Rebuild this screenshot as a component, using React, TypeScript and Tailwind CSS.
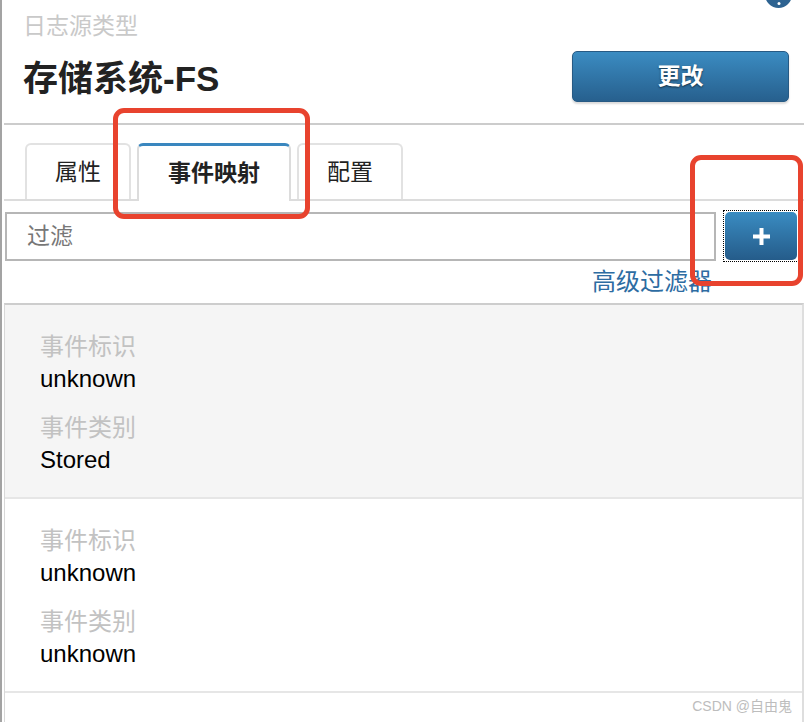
import React from "react";

interface MappingItem {
  id: string;
  category: string;
  shaded?: boolean;
}

const items: MappingItem[] = [
  { id: "unknown", category: "Stored", shaded: true },
  { id: "unknown", category: "unknown" },
];

const MappingRow = ({ id, category, shaded }: MappingItem) => (
  <div
    className={`h-[194px] border-b-2 border-[#e6e6e6] pl-[35px] pt-[28px] ${
      shaded ? "bg-[#f5f5f5]" : "bg-white"
    }`}
  >
    <div className="text-[24px] leading-[28px] text-[#c2c2c2]">事件标识</div>
    <div className="mt-[4px] text-[24px] leading-[28px] text-black">{id}</div>
    <div className="mt-[21px] text-[24px] leading-[28px] text-[#c2c2c2]">事件类别</div>
    <div className="mt-[4px] text-[24px] leading-[28px] text-black">{category}</div>
  </div>
);

export default function App() {
  return (
    <div className="relative h-[722px] w-[804px] overflow-hidden border-l-2 border-[#a3a3a3] bg-white font-['Liberation_Sans','Noto_Sans_CJK_SC',sans-serif]">
      {/* help icon peeking in at the top */}
      <div className="absolute right-[12px] top-[-19px] size-[27px] rounded-full bg-[#2d6391]">
        <span className="absolute bottom-[3px] left-1/2 size-[3px] -translate-x-1/2 rounded-full bg-white" />
      </div>

      <header className="pl-[21px] pr-[15px] pt-[12px]">
        <div className="text-[23px] leading-[28px] text-[#c9c9c9]">日志源类型</div>
        <div className="mt-[11px] flex items-center justify-between">
          <h1 className="mt-[5px] text-[35px] font-bold leading-[40px] text-[#222]">存储系统-FS</h1>
          <button className="h-[51px] w-[217px] rounded-[5px] border border-[#275a84] bg-linear-to-b from-[#3b8cc2] to-[#27608e] text-[23px] font-bold text-white shadow-[0_2px_2px_rgba(0,0,0,0.15)] [text-shadow:0_1px_2px_rgba(0,0,0,0.6)]">
            更改
          </button>
        </div>
      </header>

      <div className="ml-[2px] mt-[21px] h-[2px] bg-[#cccccc]" />

      {/* tabs */}
      <div className="ml-[2px] mt-[18px] flex gap-[6px] border-b-2 border-[#dcdcdc] pl-[21px]">
        <div className="flex h-[56px] w-[106px] items-center justify-center rounded-t-[6px] border-x-2 border-t-2 border-[#e2e2e2] text-[23px] text-[#222]">
          属性
        </div>
        <div className="-mb-[2px] flex h-[58px] w-[154px] items-center justify-center rounded-t-[6px] border-x-2 border-t-[3px] border-x-[#dcdcdc] border-t-[#3a87bf] bg-white text-[23px] font-bold text-[#222]">
          事件映射
        </div>
        <div className="flex h-[56px] w-[106px] items-center justify-center rounded-t-[6px] border-x-2 border-t-2 border-[#e2e2e2] text-[23px] text-[#222]">
          配置
        </div>
      </div>

      {/* filter */}
      <div className="ml-[2px] mt-[9px] flex items-center gap-[7px]">
        <input
          placeholder="过滤"
          className="ml-[1px] h-[49px] w-[711px] border-2 border-[#b6b6b6] bg-white pl-[20px] text-[23px] text-[#333] outline-none placeholder:text-[#777]"
        />
        <div className="h-[52px] w-[76px] border border-dotted border-black p-px">
          <button className="flex size-full items-center justify-center rounded-[5px] bg-linear-to-b from-[#3a8cc2] to-[#255c8a]">
            <svg width="17" height="17" viewBox="0 0 17 17">
              <rect x="6.5" y="0" width="4" height="17" fill="white" />
              <rect x="0" y="6.5" width="17" height="4" fill="white" />
            </svg>
          </button>
        </div>
      </div>

      <div className="mt-[6px] flex justify-end pr-[92px] text-[24px] leading-[28px] text-[#2d6ca2]">高级过滤器</div>

      {/* mapping list */}
      <div className="ml-[2px] mt-[7px] h-[420px] border-l border-r-2 border-t-2 border-l-[#d8d8d8] border-r-[#dedede] border-t-[#cdcdcd]">
        {items.map((item, i) => (
          <MappingRow key={i} {...item} />
        ))}
      </div>

      <div className="absolute bottom-[5px] right-[12px] text-[14px] text-[#bdbdbd]">CSDN @自由鬼</div>

      {/* red annotation boxes */}
      <div className="absolute left-[111px] top-[108px] h-[111px] w-[197px] rounded-[11px] border-[5px] border-[#e8432e]" />
      <div className="absolute left-[688px] top-[155px] h-[131px] w-[113px] rounded-[11px] border-[5px] border-[#e8432e]" />
    </div>
  );
}
